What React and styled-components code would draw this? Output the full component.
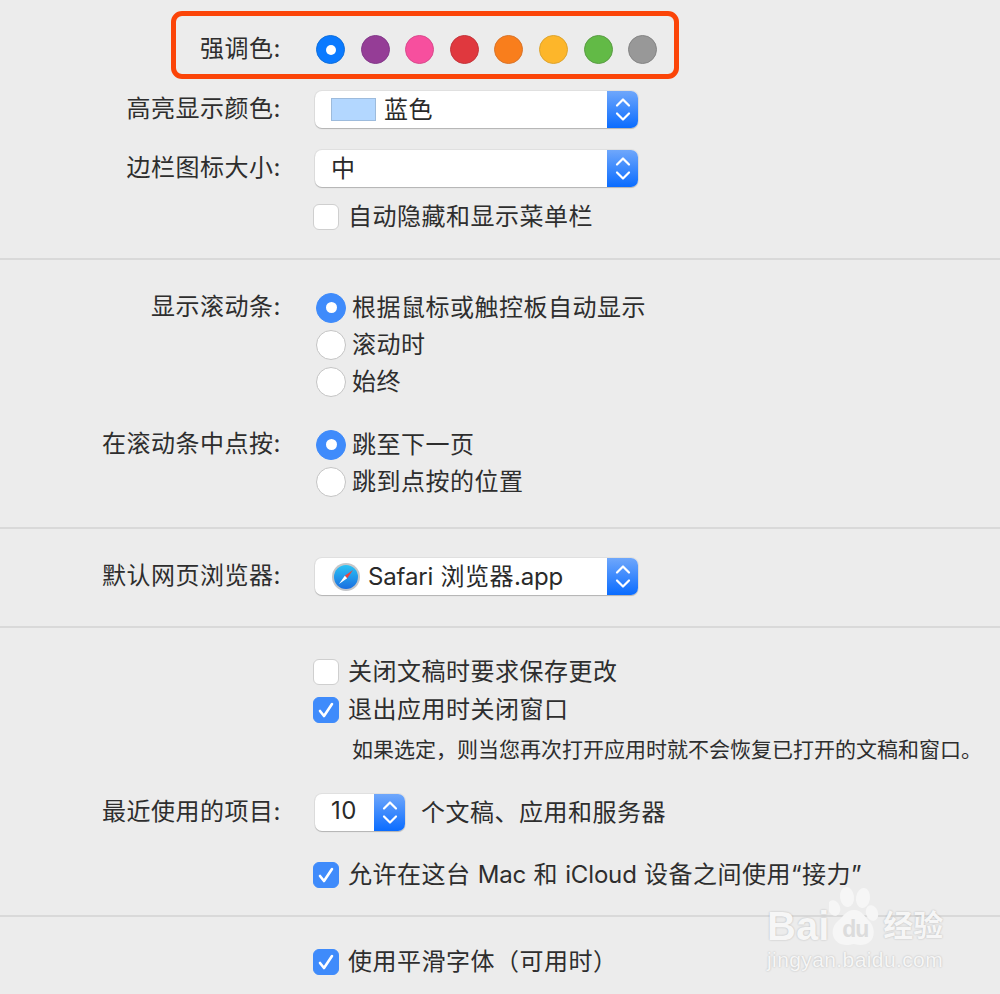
import styled, { createGlobalStyle } from 'styled-components';

const GlobalStyle = createGlobalStyle`
  html, body {
    margin: 0;
    padding: 0;
    background: #ececec;
  }
  body {
    font-family: Inter, 'Noto Sans CJK SC', 'Noto Sans', sans-serif;
    color: #2e2e2e;
  }
`;

const Page = styled('div')`
  position: relative;
  width: 1000px;
  height: 994px;
  overflow: hidden;
  background: #ececec;
`;

const Section = styled('section')`
  padding: ${(p) => p.$top}px 0 ${(p) => p.$bottom || 0}px;
  border-bottom: ${(p) => (p.$last ? 'none' : '2px solid #d9d9d9')};
`;

const Row = styled('div')`
  display: grid;
  grid-template-columns: 285px 1fr;
  column-gap: 30px;
  align-items: center;
  height: ${(p) => p.$height || 37}px;
  margin-top: ${(p) => p.$top || 0}px;
`;

const Label = styled('div')`
  padding: 0 4px 1px 0;
  font-size: 24px;
  letter-spacing: 0.5px;
  line-height: 34px;
  text-align: right;
  white-space: nowrap;
`;

const Control = styled('div')`
  display: flex;
  align-items: center;
  min-width: 0;
  white-space: nowrap;
`;

const Swatches = styled('div')`
  display: flex;
  gap: 15.6px;
  margin-left: 1px;
`;

const Swatch = styled('span')`
  display: flex;
  align-items: center;
  justify-content: center;
  box-sizing: border-box;
  width: 29px;
  height: 29px;
  border-radius: 50%;
  background: ${(p) => p.$color};
  border: 1.5px solid ${(p) => p.$edge};
`;

const SwatchDot = styled('span')`
  width: 10px;
  height: 10px;
  border-radius: 50%;
  background: #fff;
`;

const SelectBox = styled('div')`
  display: flex;
  align-items: stretch;
  width: ${(p) => p.$width}px;
  height: 37px;
  border-radius: 7px;
  background: #fff;
  box-shadow: 0 0 0 1px rgba(0, 0, 0, 0.05), 0 1px 1px rgba(0, 0, 0, 0.2);
  overflow: hidden;
  font-size: 24px;
  letter-spacing: 0.5px;
`;

const SelectValue = styled('div')`
  flex: 1;
  display: flex;
  align-items: center;
  gap: 8px;
  padding: 0 0 4px 16px;
  color: #2a2a2a;
`;

const Stepper = styled('div')`
  display: flex;
  align-items: center;
  justify-content: center;
  width: 31px;
  background: linear-gradient(#6fa7fb, #0a6cff);
`;

const ColorChip = styled('span')`
  box-sizing: border-box;
  width: 45px;
  height: 23px;
  margin-top: 4px;
  background: #b3d7ff;
  border: 1px solid #9dbbdc;
`;

const IconSlot = styled('span')`
  display: flex;
  margin: 4px 0 0 1px;
`;

const Latin = styled('span')`
  letter-spacing: -0.15px;
`;

const Check = styled('span')`
  display: flex;
  align-items: center;
  justify-content: center;
  flex: none;
  box-sizing: border-box;
  width: 26px;
  height: 26px;
  margin-left: -2px;
  border-radius: 6px;
  background: ${(p) => (p.$on ? '#3f8bfb' : '#fff')};
  border: 1px solid ${(p) => (p.$on ? '#3f8bfb' : '#cfcfcf')};
`;

const Radio = styled('span')`
  display: flex;
  align-items: center;
  justify-content: center;
  flex: none;
  box-sizing: border-box;
  width: 30px;
  height: 30px;
  margin-left: 1px;
  border-radius: 50%;
  background: ${(p) => (p.$on ? '#3f8bfb' : '#fff')};
  border: 1px solid ${(p) => (p.$on ? '#3f8bfb' : '#c4c4c4')};
`;

const RadioDot = styled('span')`
  width: 11px;
  height: 11px;
  border-radius: 50%;
  background: #fff;
`;

const OptionText = styled('span')`
  margin-left: ${(p) => p.$gap}px;
  padding-bottom: 4px;
  font-size: 24px;
  letter-spacing: 0.5px;
`;

const Hint = styled('span')`
  margin-left: 37px;
  padding-bottom: 4px;
  font-size: 21px;
  letter-spacing: 0;
`;

const Annotation = styled('div')`
  position: absolute;
  left: 171px;
  top: 11px;
  box-sizing: border-box;
  width: 508px;
  height: 68px;
  border: 5px solid #fb4408;
  border-radius: 11px;
  pointer-events: none;
`;

const Watermark = styled('div')`
  position: absolute;
  left: 767px;
  top: 886px;
  width: 185px;
  color: #f6f6f6;
  text-shadow: 0 0 2px rgba(0, 0, 0, 0.24);
  font-family: 'Liberation Sans', 'Noto Sans CJK SC', sans-serif;
  pointer-events: none;
`;

const MarkTop = styled('div')`
  display: flex;
  align-items: flex-end;
  height: 63px;
`;

const MarkBai = styled('span')`
  font-size: 40px;
  line-height: 46px;
  font-weight: 700;
`;

const MarkPaw = styled('span')`
  position: relative;
  width: 52px;
  height: 63px;
`;

const MarkDu = styled('span')`
  position: absolute;
  left: 13px;
  bottom: 8px;
  font-size: 23px;
  line-height: 24px;
  font-weight: 700;
  letter-spacing: -1px;
  color: #dcdcdc;
  text-shadow: none;
`;

const MarkCn = styled('span')`
  margin-left: 2px;
  font-size: 30px;
  line-height: 46px;
  font-weight: 700;
`;

const MarkUrl = styled('div')`
  margin-top: -2px;
  font-size: 21px;
  line-height: 26px;
  letter-spacing: 0.4px;
`;

function UpDown() {
  return (
    <svg width='18' height='27' viewBox='0 0 18 27' fill='none' stroke='#fff' strokeWidth='2.2' strokeLinecap='round' strokeLinejoin='round'>
      <path d='M3 9.5 9 3.5l6 6' />
      <path d='M3 17.5l6 6 6-6' />
    </svg>
  );
}

function Tick() {
  return (
    <svg width='18' height='18' viewBox='0 0 18 18' fill='none' stroke='#fff' strokeWidth='2.6' strokeLinecap='round' strokeLinejoin='round'>
      <path d='M3 10l4 5 8-12' />
    </svg>
  );
}

function SafariIcon() {
  return (
    <svg width='28' height='28' viewBox='0 0 28 28'>
      <defs>
        <linearGradient id='safariBlue' x1='0' y1='0' x2='0' y2='1'>
          <stop offset='0' stopColor='#2bc3f5' />
          <stop offset='1' stopColor='#1a6fe0' />
        </linearGradient>
      </defs>
      <circle cx='14' cy='14' r='14' fill='#c4c6c9' />
      <circle cx='14' cy='14' r='12' fill='url(#safariBlue)' />
      <path d='M21 7 12.8 12.8 15.2 15.2z' fill='#f0443c' />
      <path d='M7 21 15.2 15.2 12.8 12.8z' fill='#fff' />
    </svg>
  );
}

const ACCENTS = [
  { color: '#0a7aff', edge: '#0f6fdc', selected: true },
  { color: '#953d96', edge: '#83398a' },
  { color: '#f74f9e', edge: '#d94a8c' },
  { color: '#e0383e', edge: '#c4353b' },
  { color: '#f97e1c', edge: '#d9742a' },
  { color: '#fdb62a', edge: '#dda42e' },
  { color: '#62ba46', edge: '#5a9c44' },
  { color: '#989898', edge: '#858585' },
];

function RadioRow({ label, text, on, top }) {
  return (
    <Row $top={top}>
      <Label>{label}</Label>
      <Control>
        <Radio $on={on}>{on && <RadioDot />}</Radio>
        <OptionText $gap={6}>{text}</OptionText>
      </Control>
    </Row>
  );
}

function CheckRow({ children, on, top }) {
  return (
    <Row $top={top}>
      <span />
      <Control>
        <Check $on={on}>{on && <Tick />}</Check>
        <OptionText $gap={9}>{children}</OptionText>
      </Control>
    </Row>
  );
}

export default function App() {
  return (
    <Page>
      <GlobalStyle />

      <Section $top={31} $bottom={24}>
        <Row>
          <Label>强调色:</Label>
          <Control>
            <Swatches>
              {ACCENTS.map((a) => (
                <Swatch key={a.color} $color={a.color} $edge={a.edge}>
                  {a.selected && <SwatchDot />}
                </Swatch>
              ))}
            </Swatches>
          </Control>
        </Row>
        <Row $top={23}>
          <Label>高亮显示颜色:</Label>
          <Control>
            <SelectBox $width={323}>
              <SelectValue>
                <ColorChip />
                蓝色
              </SelectValue>
              <Stepper><UpDown /></Stepper>
            </SelectBox>
          </Control>
        </Row>
        <Row $top={22}>
          <Label>边栏图标大小:</Label>
          <Control>
            <SelectBox $width={323}>
              <SelectValue>中</SelectValue>
              <Stepper><UpDown /></Stepper>
            </SelectBox>
          </Control>
        </Row>
        <CheckRow top={10}>自动隐藏和显示菜单栏</CheckRow>
      </Section>

      <Section $top={28} $bottom={28}>
        <RadioRow label='显示滚动条:' text='根据鼠标或触控板自动显示' on />
        <RadioRow text='滚动时' />
        <RadioRow text='始终' />
        <RadioRow label='在滚动条中点按:' text='跳至下一页' on top={26} />
        <RadioRow text='跳到点按的位置' />
      </Section>

      <Section $top={29} $bottom={31}>
        <Row>
          <Label>默认网页浏览器:</Label>
          <Control>
            <SelectBox $width={323}>
              <SelectValue>
                <IconSlot><SafariIcon /></IconSlot>
                <span><Latin>Safari</Latin> 浏览器<Latin>.app</Latin></span>
              </SelectValue>
              <Stepper><UpDown /></Stepper>
            </SelectBox>
          </Control>
        </Row>
      </Section>

      <Section $top={24} $bottom={23}>
        <CheckRow>关闭文稿时要求保存更改</CheckRow>
        <CheckRow on top={1}>退出应用时关闭窗口</CheckRow>
        <Row $top={6} $height={30}>
          <span />
          <Control>
            <Hint>如果选定，则当您再次打开应用时就不会恢复已打开的文稿和窗口。</Hint>
          </Control>
        </Row>
        <Row $top={30}>
          <Label>最近使用的项目:</Label>
          <Control>
            <SelectBox $width={90}>
              <SelectValue>10</SelectValue>
              <Stepper><UpDown /></Stepper>
            </SelectBox>
            <OptionText $gap={16}>个文稿、应用和服务器</OptionText>
          </Control>
        </Row>
        <CheckRow on top={25}>允许在这台 <Latin>Mac</Latin> 和 <Latin>iCloud</Latin> 设备之间使用“接力”</CheckRow>
      </Section>

      <Section $top={25} $last>
        <CheckRow on>使用平滑字体（可用时）</CheckRow>
      </Section>

      <Annotation />

      <Watermark>
        <MarkTop>
          <MarkBai>Bai</MarkBai>
          <MarkPaw>
            <svg width='52' height='63' viewBox='0 0 52 63' fill='#f6f6f6'>
              <ellipse cx='5' cy='22' rx='6' ry='8' transform='rotate(-20 5 22)' />
              <ellipse cx='18' cy='11' rx='7' ry='10' transform='rotate(-8 18 11)' />
              <ellipse cx='34' cy='12' rx='7' ry='10' transform='rotate(8 34 12)' />
              <ellipse cx='43' cy='27' rx='6' ry='8' transform='rotate(-20 43 27)' />
              <path d='M25 24c8 0 10 6 15 11 7 6 8 24-9 24-3 0-4-1-6-1s-3 1-7 1C2 59 0 42 9 35c6-5 8-11 16-11z' />
            </svg>
            <MarkDu>du</MarkDu>
          </MarkPaw>
          <MarkCn>经验</MarkCn>
        </MarkTop>
        <MarkUrl>jingyan.baidu.com</MarkUrl>
      </Watermark>
    </Page>
  );
}
